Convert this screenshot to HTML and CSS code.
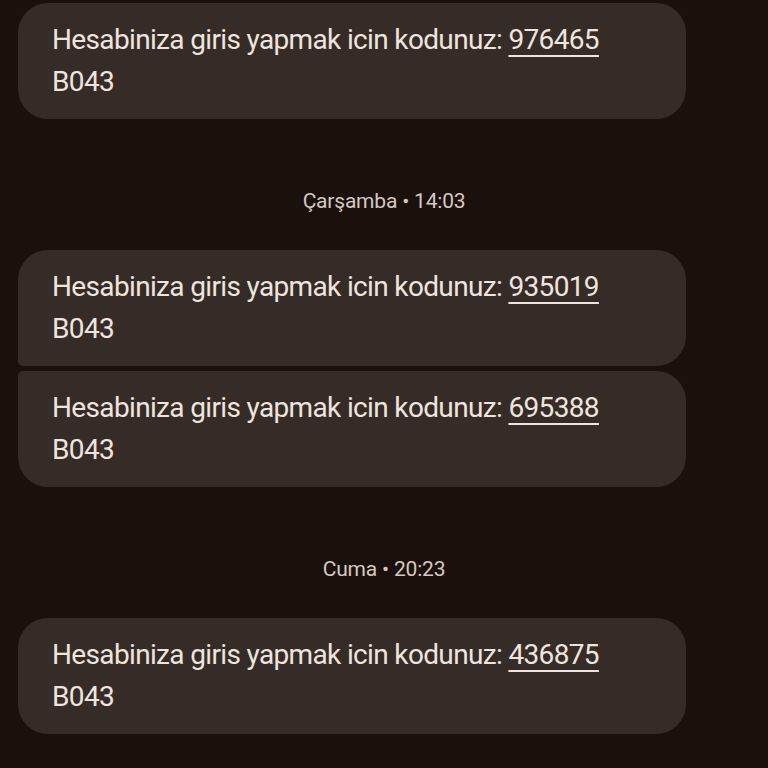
FILE: index.html
```html
<!DOCTYPE html>
<html lang="tr">
<head>
<meta charset="utf-8">
<link rel="stylesheet" href="styles.css">
</head>
<body>
<main class="thread">
  <div class="bubble bubble-single">
    <p class="msg">Hesabiniza giris yapmak icin kodunuz: <span class="code">976465</span><br>B043</p>
  </div>

  <div class="day-label">Çarşamba • 14:03</div>

  <div class="group">
    <div class="bubble bubble-first">
      <p class="msg">Hesabiniza giris yapmak icin kodunuz: <span class="code">935019</span><br>B043</p>
    </div>
    <div class="bubble bubble-last">
      <p class="msg">Hesabiniza giris yapmak icin kodunuz: <span class="code">695388</span><br>B043</p>
    </div>
  </div>

  <div class="day-label">Cuma • 20:23</div>

  <div class="bubble bubble-single">
    <p class="msg">Hesabiniza giris yapmak icin kodunuz: <span class="code">436875</span><br>B043</p>
  </div>
</main>
</body>
</html>
```

FILE: styles.css
```css
html, body {
  margin: 0;
  padding: 0;
  background: #1a110d;
  height: 100%;
  overflow: hidden;
}

.thread {
  display: flex;
  flex-direction: column;
  padding: 3px 82px 0 18px;
  font-family: Roboto, "Noto Sans", sans-serif;
}

.group {
  display: flex;
  flex-direction: column;
  gap: 5px;
}

.bubble {
  background: #352c28;
  padding: 16px 20px 16px 34px;
  border-radius: 30px;
}

.bubble-first {
  border-radius: 30px 30px 30px 5px;
}

.bubble-last {
  border-radius: 5px 30px 30px 30px;
}

.msg {
  margin: 0;
  color: #efe4de;
  font-size: 28px;
  line-height: 42px;
  letter-spacing: -0.65px;
}

.code {
  text-decoration: underline;
  text-decoration-thickness: 2px;
  text-underline-offset: 6px;
}

.day-label {
  margin: 70px 0 37px;
  height: 24px;
  line-height: 24px;
  text-align: center;
  color: #d6c8c0;
  font-size: 21px;
  letter-spacing: -0.2px;
  padding-left: 64px;
}
```
